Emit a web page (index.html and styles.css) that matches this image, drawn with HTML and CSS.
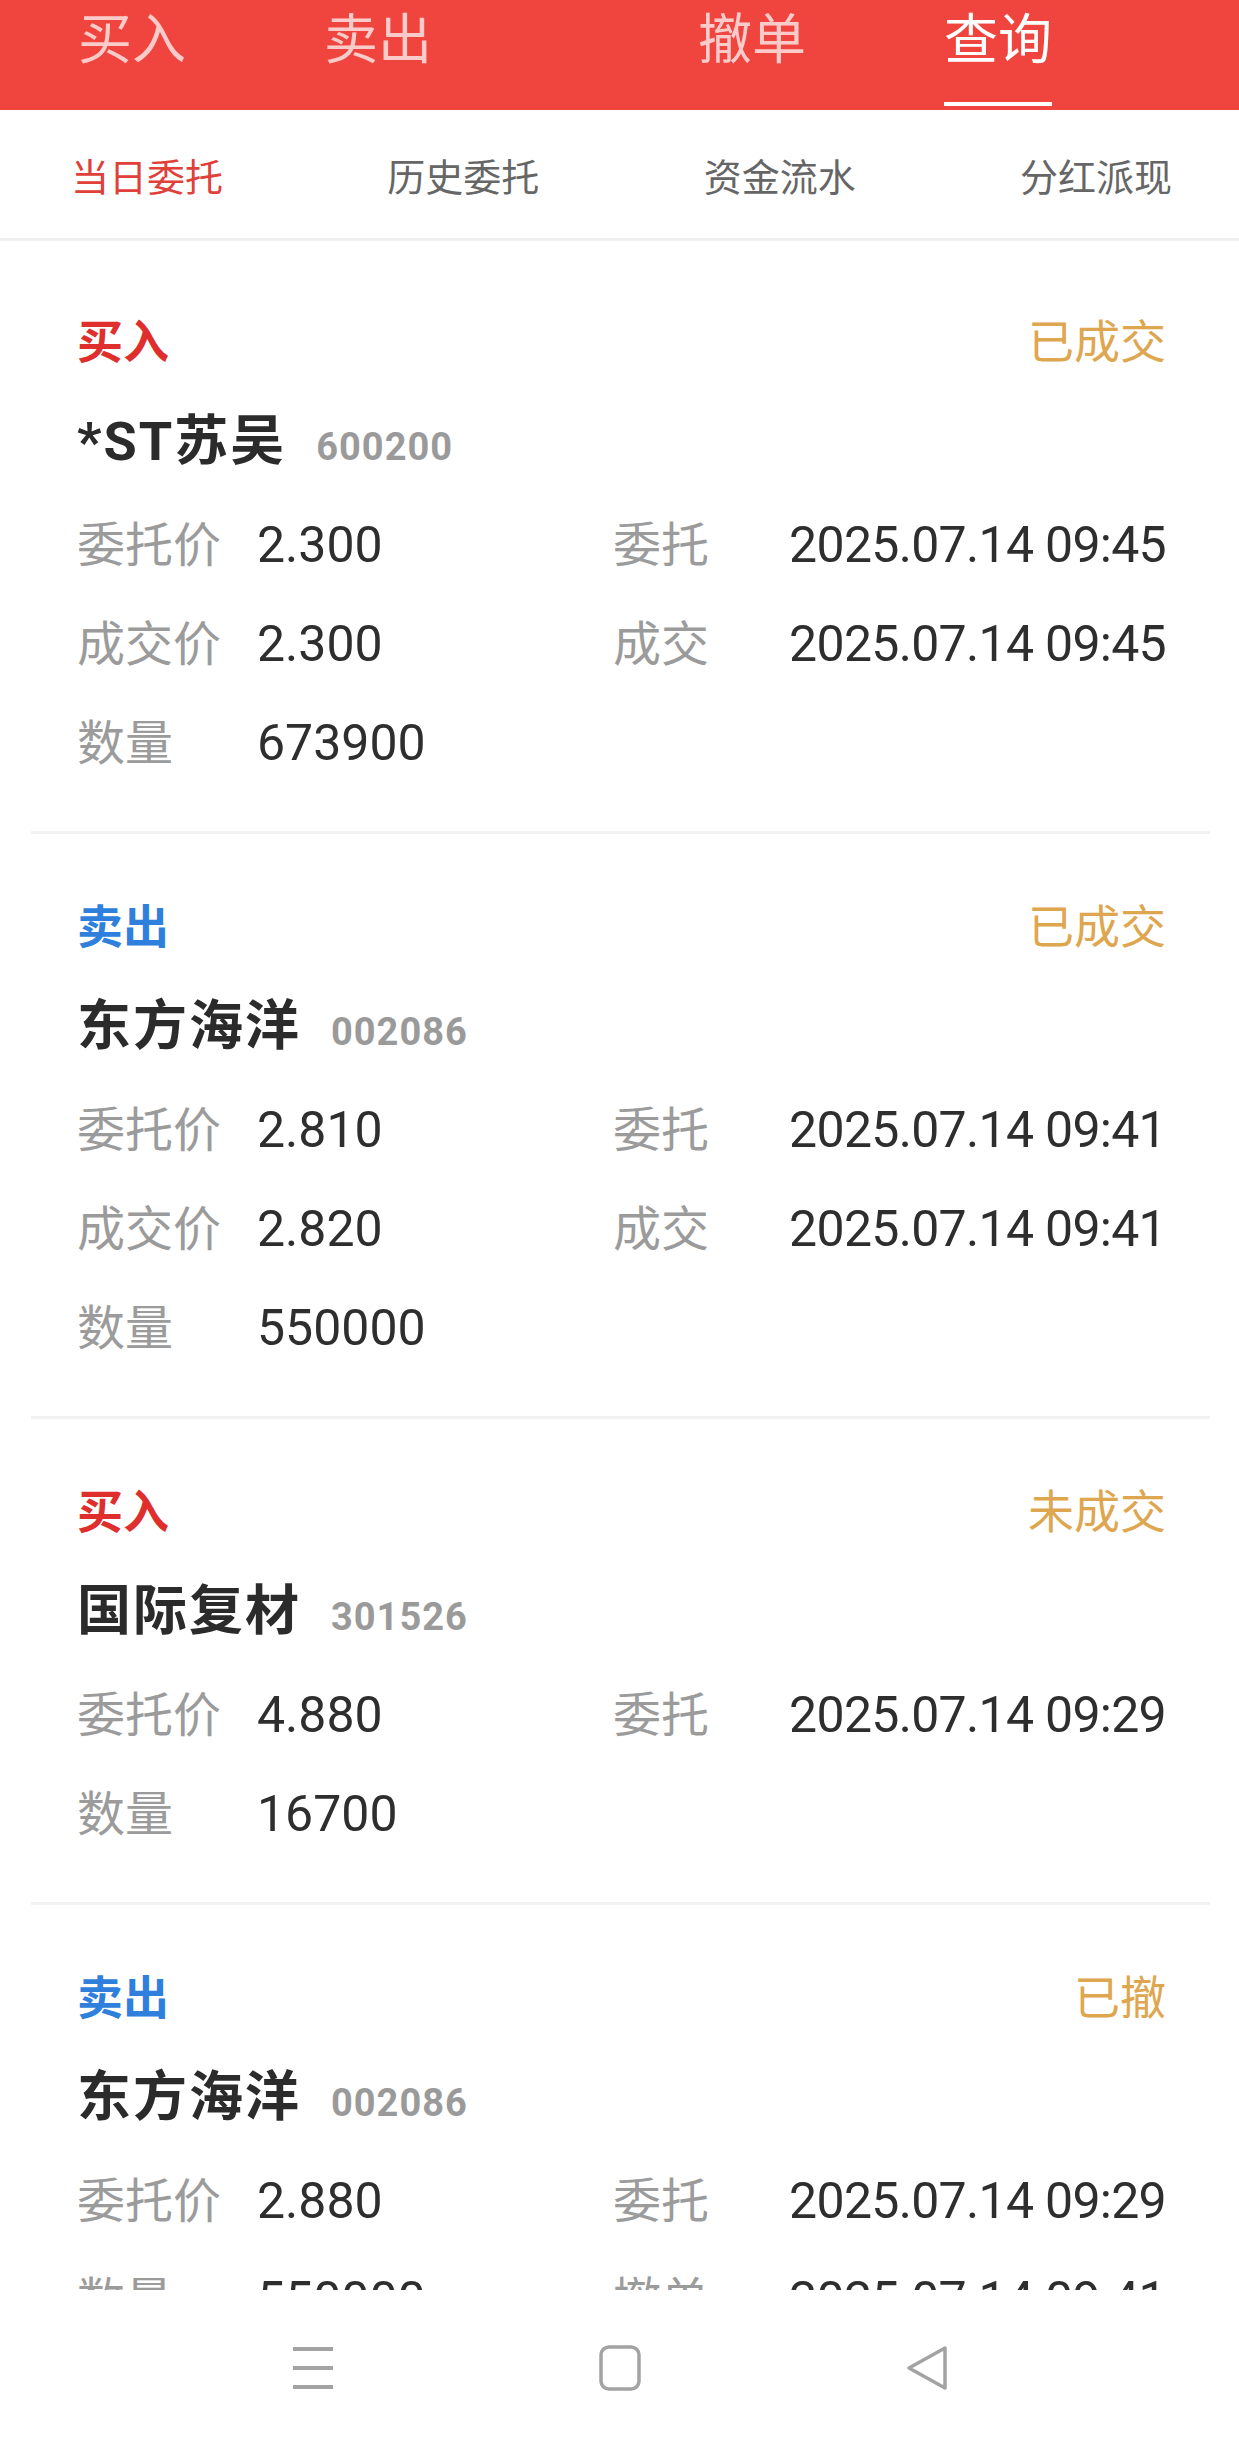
FILE: index.html
```html
<!DOCTYPE html>
<html lang="zh-CN">
<head>
  <meta charset="UTF-8" />
  <title>当日委托</title>
  <link rel="stylesheet" href="styles.css">
</head>
<body>

  <div class="topbar">
    <div class="tab">买入</div>
    <div class="tab">卖出</div>
    <div class="tab tab-far">撤单</div>
    <div class="tab active">查询</div>
  </div>

  <div class="subtabs">
    <div class="sub active">当日委托</div>
    <div class="sub">历史委托</div>
    <div class="sub">资金流水</div>
    <div class="sub">分红派现</div>
  </div>

  <div class="list">

    <div class="order">
      <div class="order-head"><span class="side buy">买入</span><span class="status">已成交</span></div>
      <div class="order-name">*ST苏吴<span class="code">600200</span></div>
      <div class="row">
        <div class="cell"><span class="lbl">委托价</span><span class="val">2.300</span></div>
        <div class="cell cell-r"><span class="lbl">委托</span><span class="val date">2025.07.14 09:45</span></div>
      </div>
      <div class="row">
        <div class="cell"><span class="lbl">成交价</span><span class="val">2.300</span></div>
        <div class="cell cell-r"><span class="lbl">成交</span><span class="val date">2025.07.14 09:45</span></div>
      </div>
      <div class="row">
        <div class="cell"><span class="lbl">数量</span><span class="val">673900</span></div>
      </div>
    </div>

    <div class="order">
      <div class="order-head"><span class="side sell">卖出</span><span class="status">已成交</span></div>
      <div class="order-name">东方海洋<span class="code">002086</span></div>
      <div class="row">
        <div class="cell"><span class="lbl">委托价</span><span class="val">2.810</span></div>
        <div class="cell cell-r"><span class="lbl">委托</span><span class="val date">2025.07.14 09:41</span></div>
      </div>
      <div class="row">
        <div class="cell"><span class="lbl">成交价</span><span class="val">2.820</span></div>
        <div class="cell cell-r"><span class="lbl">成交</span><span class="val date">2025.07.14 09:41</span></div>
      </div>
      <div class="row">
        <div class="cell"><span class="lbl">数量</span><span class="val">550000</span></div>
      </div>
    </div>

    <div class="order">
      <div class="order-head"><span class="side buy">买入</span><span class="status">未成交</span></div>
      <div class="order-name">国际复材<span class="code">301526</span></div>
      <div class="row">
        <div class="cell"><span class="lbl">委托价</span><span class="val">4.880</span></div>
        <div class="cell cell-r"><span class="lbl">委托</span><span class="val date">2025.07.14 09:29</span></div>
      </div>
      <div class="row">
        <div class="cell"><span class="lbl">数量</span><span class="val">16700</span></div>
      </div>
    </div>

    <div class="order">
      <div class="order-head"><span class="side sell">卖出</span><span class="status">已撤</span></div>
      <div class="order-name">东方海洋<span class="code">002086</span></div>
      <div class="row">
        <div class="cell"><span class="lbl">委托价</span><span class="val">2.880</span></div>
        <div class="cell cell-r"><span class="lbl">委托</span><span class="val date">2025.07.14 09:29</span></div>
      </div>
      <div class="row">
        <div class="cell"><span class="lbl">数量</span><span class="val">550000</span></div>
        <div class="cell cell-r"><span class="lbl">撤单</span><span class="val date">2025.07.14 09:41</span></div>
      </div>
    </div>

  </div>

  <div class="navbar">
    <div class="nav-slot">
      <svg width="44" height="44" viewBox="0 0 44 44"><path d="M2 3h40M2 22h40M2 41h40" stroke="#a3a3a3" stroke-width="4" fill="none"/></svg>
    </div>
    <div class="nav-slot">
      <svg width="44" height="46" viewBox="0 0 44 46"><rect x="3" y="2" width="38" height="42" rx="8" stroke="#a3a3a3" stroke-width="3.5" fill="none"/></svg>
    </div>
    <div class="nav-slot">
      <svg width="44" height="46" viewBox="0 0 44 46"><path d="M40 3 L4 23 L40 43 Z" stroke="#a3a3a3" stroke-width="3.5" stroke-linejoin="round" fill="none"/></svg>
    </div>
  </div>

</body>
</html>
```

FILE: styles.css
```css
html, body {
  margin: 0;
  padding: 0;
}
body {
  width: 1239px;
  height: 2445px;
  overflow: hidden;
  display: flex;
  flex-direction: column;
  background: #fff;
  font-family: Roboto, "Noto Sans CJK SC", sans-serif;
  color: #333;
}

/* top red tabs */
.topbar {
  height: 110px;
  flex-shrink: 0;
  background: #f0443e;
  display: flex;
  padding-left: 78px;
  gap: 138px;
}
.tab {
  font-family: "Noto Sans CJK SC", sans-serif;
  font-size: 54px;
  line-height: 72px;
  height: 106px;
  box-sizing: border-box;
  color: rgba(255, 255, 255, 0.72);
}
.tab-far {
  margin-left: 128px;
}
.tab.active {
  color: #fff;
  border-bottom: 4px solid #fff;
}

/* sub tabs */
.subtabs {
  height: 128px;
  flex-shrink: 0;
  display: flex;
  justify-content: space-between;
  align-items: center;
  padding: 0 67px 0 71px;
  border-bottom: 3px solid #efefef;
}
.sub {
  font-family: "Noto Sans CJK SC", sans-serif;
  font-size: 38px;
  color: #666;
}
.sub.active {
  color: #e0403a;
}

/* order list */
.list {
  flex: 1;
  min-height: 0;
  overflow: hidden;
  padding-top: 8px;
}
.order {
  margin: 0 29px 0 31px;
  padding: 42px 44px 42px 46px;
  border-bottom: 3px solid #f2f2f2;
}
.order-head {
  display: flex;
  justify-content: space-between;
  height: 100px;
  line-height: 94px;
}
.side {
  font-family: "Noto Sans CJK SC", sans-serif;
  font-size: 46px;
  font-weight: bold;
}
.buy {
  color: #de2f2c;
}
.sell {
  color: #2f7fdc;
}
.status {
  font-family: "Noto Sans CJK SC", sans-serif;
  font-size: 46px;
  color: #dea74f;
}
.order-name {
  height: 101px;
  line-height: 101px;
  font-size: 54px;
  font-weight: bold;
  letter-spacing: 2px;
  color: #2b2b2b;
}
.code {
  font-size: 38px;
  letter-spacing: 1px;
  color: #9a9a9a;
  margin-left: 30px;
}
.row {
  display: grid;
  grid-template-columns: 536px 1fr;
  height: 99px;
  line-height: 99px;
}
.cell {
  display: flex;
  align-items: baseline;
}
.cell-r {
  justify-content: space-between;
}
.lbl {
  font-family: "Noto Sans CJK SC", sans-serif;
  font-size: 48px;
  color: #9b9b9b;
  width: 180px;
}
.cell-r .lbl {
  width: auto;
}
.val {
  font-size: 50px;
  color: #2e2e2e;
}
.date {
  letter-spacing: -0.7px;
}

/* system nav bar */
.navbar {
  height: 155px;
  flex-shrink: 0;
  background: #fff;
  display: flex;
  justify-content: center;
  align-items: center;
}
.nav-slot {
  width: 307px;
  display: flex;
  justify-content: center;
}
.nav-slot svg {
  display: block;
}
```
